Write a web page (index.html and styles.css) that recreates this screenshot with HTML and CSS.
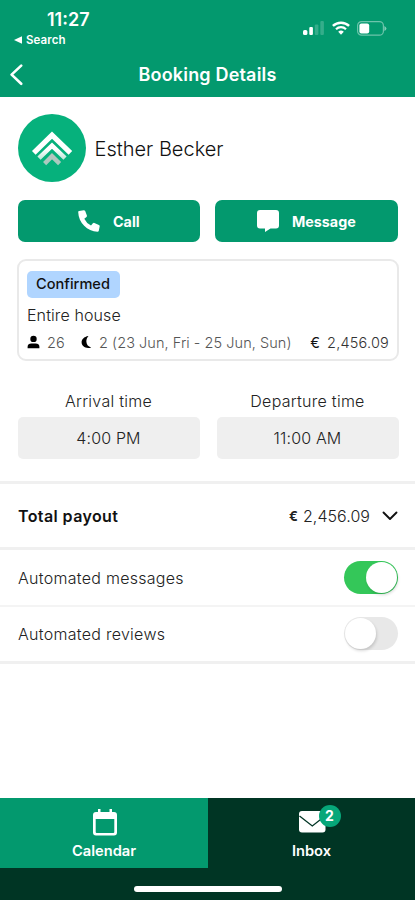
FILE: index.html
```html
<!DOCTYPE html>
<html lang="en">
<head>
<meta charset="utf-8">
<meta name="viewport" content="width=device-width, initial-scale=1">
<title>Booking Details</title>
<link rel="stylesheet" href="styles.css">
</head>
<body>
<div class="app">
  <header class="header">
    <div class="status">
      <div class="status-left">
        <div class="clock">11:27</div>
        <div class="back-app"><svg width="8" height="8" viewBox="0 0 8 8"><path d="M0 4 8 .2v7.6z" fill="#fff"/></svg><span>Search</span></div>
      </div>
      <div class="status-icons">
        <svg width="22" height="15" viewBox="0 0 22 15" fill="#fff"><rect x="0" y="9" width="4.4" height="5" rx="1.6"/><rect x="6.3" y="6" width="3.6" height="8" rx="1"/><rect x="11.8" y="3.5" width="3.6" height="10.5" rx="1" opacity=".2"/><rect x="17.3" y="0" width="3.6" height="14" rx="1" opacity=".2"/></svg>
        <svg class="wifi" width="18" height="14" viewBox="0 0 18 14" fill="none" stroke="#fff" stroke-width="2.5"><path d="M.9 4.9a11.7 11.7 0 0 1 16.2 0"/><path d="M4 8.2a7.2 7.2 0 0 1 10 0" stroke-width="2.2"/><path d="M9 13.8 6.2 10.8a4.2 4.2 0 0 1 5.6 0z" fill="#fff" stroke="none"/></svg>
        <svg class="battery" width="30" height="15" viewBox="0 0 30 15"><rect x=".6" y=".6" width="25.8" height="13.6" rx="4" fill="none" stroke="#fff" stroke-opacity=".42" stroke-width="1.2"/><path d="M27.4 5v5q2-1 2-2.5T27.4 5" fill="#fff" opacity=".5"/><rect x="2.4" y="2.4" width="9.8" height="10" rx="2" fill="#fff"/></svg>
      </div>
    </div>
    <div class="title-bar">
      <svg width="13" height="22" viewBox="0 0 13 22" fill="none" stroke="#fff" stroke-width="2.6" stroke-linecap="round" stroke-linejoin="round"><path d="M11.2 1.6 1.600 10.600l9.600 9.200"/></svg>
      <h1>Booking Details</h1>
    </div>
  </header>

  <main>
    <section class="guest">
      <div class="avatar">
        <svg width="68" height="68" viewBox="0 0 68 68" fill="none" stroke-width="5.2">
          <defs>
            <linearGradient id="g1" x1="0" y1="0" x2="0" y2="1"><stop offset=".3" stop-color="#fff"/><stop offset="1" stop-color="#c4eadc"/></linearGradient>
            <linearGradient id="g2" x1="0" y1="0" x2="0" y2="1"><stop offset="0" stop-color="#b5c4bf"/><stop offset="1" stop-color="#a9cbbf"/></linearGradient>
          </defs>
          <path d="M15.8 38.8 34 21.2l18.4 17.6" stroke="#fff"/>
          <path d="M21 44.2 34 31.6l13 12.6" stroke="url(#g1)" stroke-width="4.6"/>
          <path d="M26.6 49.6 34 42.2l7.6 7.4" stroke="url(#g2)" stroke-width="4.4"/>
        </svg>
      </div>
      <h2>Esther Becker</h2>
    </section>

    <section class="actions">
      <button class="btn call"><svg width="22" height="22" viewBox="0 0 22 22"><path d="M1.1.9 5.700.2q1-.1 1.500.8l1.700 4.500q.3.900-.4 1.500L6.300 8.700q2.100 4.500 6.700 6.800l1.900-2.200q.6-.7 1.500-.4l4.500 2q.9.400.8 1.400l-.9 4.500q-.2 1-1.300 1C9.400 21.300.5 13 .2 2q0-1 .9-1.100z" fill="#fff"/></svg><span>Call</span></button>
      <button class="btn message"><svg width="22" height="22" viewBox="0 0 22 22"><path d="M3 0h16q3 0 3 3v12.500q0 3-3 3h-5.500L8 22v-3.500H3q-3 0-3-3V3q0-3 3-3" fill="#fff"/></svg><span>Message</span></button>
    </section>

    <section class="card">
      <div class="badge">Confirmed</div>
      <div class="place">Entire house</div>
      <div class="facts">
        <svg width="13" height="14" viewBox="0 0 13 14"><circle cx="6.500" cy="3.900" r="3.200"/><path d="M.6 13.200V11.800C.6 9.700 2.200 8.600 4.300 8.600h4.400c2.100 0 3.700 1.100 3.700 3.200v1.400z"/></svg>
        <span class="people">26</span>
        <svg class="moon" width="11" height="14" viewBox="0 0 11 14"><path d="M7.500.9C2.800 1.600.6 4.500.6 7.300c0 3.900 4.400 7 9.600 5.200C4.800 11.500 3.900 4.700 7.500.9z"/></svg>
        <span class="nights">2 (23 Jun, Fri - 25 Jun, Sun)</span>
        <span class="price"><b>€</b><span>2,456.09</span></span>
      </div>
    </section>

    <section class="times">
      <div class="time"><div class="time-label">Arrival time</div><div class="time-value">4:00 PM</div></div>
      <div class="time"><div class="time-label">Departure time</div><div class="time-value">11:00 AM</div></div>
    </section>

    <section class="row payout">
      <span class="total">Total payout</span>
      <span class="amount"><b>€</b><span>2,456.09</span>
      <svg width="16" height="10" viewBox="0 0 16 10" fill="none" stroke="#111" stroke-width="1.900" stroke-linecap="round" stroke-linejoin="round"><path d="M1.500 1.500 8 8l6.500-6.500"/></svg></span>
    </section>
    <section class="row messages"><span>Automated messages</span><span class="switch on"><i></i></span></section>
    <section class="row reviews"><span>Automated reviews</span><span class="switch"><i></i></span></section>
  </main>

  <nav class="tabs">
    <div class="tab active">
      <svg width="24" height="27" viewBox="0 0 24 27"><path fill="#fff" fill-rule="evenodd" d="M5 0h2.500v3h9V0H19v3h2q3 0 3 3v17.500q0 3-3 3H3q-3 0-3-3V6q0-3 3-3h2zM2.700 10v13q0 1 1 1h16.600q1 0 1-1V10z"/></svg>
      <span>Calendar</span>
    </div>
    <div class="tab">
      <div class="mail">
        <svg width="27" height="22" viewBox="0 0 27 22"><rect width="26.500" height="21.500" rx="3" fill="#fff"/><path d="M.5 5 13.300 15 26 5" fill="none" stroke="#003524" stroke-width="1.300"/></svg>
        <b class="count">2</b>
      </div>
      <span>Inbox</span>
    </div>
  </nav>
  <footer class="home"><div class="home-bar"></div></footer>
</div>
</body>
</html>
```
FILE: styles.css
```css
* { box-sizing: border-box; }
body { margin: 0; background: #fff; font-family: Inter, "Liberation Sans", sans-serif; color: #222; }
svg { display: block; flex: none; }
h1, h2 { margin: 0; font: inherit; }
.app { width: 415px; height: 900px; display: flex; flex-direction: column; overflow: hidden; white-space: nowrap; }
main { flex: 1; }

.header { height: 97px; background: #03996e; color: #fff; flex: none; }
.status { height: 52px; display: flex; justify-content: space-between; }
.status-left { padding: 9px 0 0 14px; }
.clock { font-size: 18px; line-height: 22px; font-weight: 600; padding-left: 33px; }
.back-app { display: flex; align-items: center; gap: 4px; font-size: 11.5px; font-weight: 600; line-height: 18px; letter-spacing: .1px; }
.status-icons { display: flex; padding: 21px 28px 0 0; }
.wifi { margin-left: 7px; }
.battery { margin-left: 7px; }
.title-bar { height: 45px; display: grid; grid-template-columns: 13px 1fr 13px; padding: 0 10px; align-items: center; }
.title-bar h1 { text-align: center; font-size: 18px; font-weight: 600; letter-spacing: .18px; line-height: 44px; }

.guest { display: flex; align-items: center; gap: 9px; height: 68px; margin: 17px 0 0 17.5px; }
.avatar { width: 68px; height: 68px; border-radius: 50%; background: #06b17c; }
.guest h2 { font-size: 20px; font-weight: 300; color: #111; padding-top: 2px; }

.actions { display: grid; grid-template-columns: 182.5px 183px; gap: 15px; margin: 18px 0 0 17.5px; }
.btn { height: 42px; border: 0; border-radius: 7px; background: #03996e; color: #fff; display: flex; align-items: center; font: 700 14.3px Inter, sans-serif; padding: 0; }
.call { padding-left: 60px; gap: 13.5px; }
.message { padding-left: 42px; gap: 13px; }

.card { height: 102px; width: 382px; margin: 17px 0 0 17px; border: 2px solid #e9e9e9; border-radius: 9px; padding: 10px 8px; }
.badge { width: 93px; height: 27px; line-height: 27px; border-radius: 5px; background: #b0d5ff; padding-left: 9px; font-size: 14.6px; font-weight: 500; color: #111; }
.place { font-size: 16px; line-height: 22px; margin-top: 6px; font-weight: 350; letter-spacing: .1px; }
.facts { display: flex; align-items: center; height: 20px; margin-top: 6px; font-size: 14.5px; font-weight: 300; color: #555; }
.people { margin-left: 7px; width: 34px; }
.nights { margin-left: 7px; letter-spacing: .05px; }
.price { margin-left: auto; display: flex; gap: 7px; color: #333; letter-spacing: .2px; }
.price b { color: #111; }

.times { display: grid; grid-template-columns: 182px 182px; gap: 17px; margin: 28px 0 0 17.5px; }
.time { text-align: center; }
.time-label { font-size: 16px; line-height: 24px; font-weight: 300; letter-spacing: .27px; }
.time-value { height: 42px; margin-top: 4px; line-height: 42px; font-size: 16px; font-weight: 350; letter-spacing: .15px; border-radius: 5px; background: #efefef; }

.row { display: flex; justify-content: space-between; align-items: center; padding: 0 17px 0 18px; border-bottom: 3px solid #f0f0f0; font-size: 16px; font-weight: 300; letter-spacing: .28px; }
.payout { height: 69px; margin-top: 22px; border-top: 3px solid #f0f0f0; }
.total { font-weight: 600; color: #111; letter-spacing: .4px; }
.amount { display: flex; align-items: center; font-weight: 350; letter-spacing: .05px; }
.amount b { font-size: 13px; margin-right: 5px; }
.amount svg { margin-left: 12px; }
.messages { height: 57px; border-bottom-width: 2px; border-color: #f4f4f4; }
.reviews { height: 57px; padding-bottom: 1px; }
.switch { width: 54px; height: 33px; border-radius: 17px; background: #e8e8e8; display: flex; padding: 1px; }
.switch i { width: 31px; height: 31px; border-radius: 50%; background: #fff; box-shadow: 1px 2px 3px rgba(0, 0, 0, .15); }
.switch.on { background: #34c759; justify-content: flex-end; }

.tabs { display: grid; grid-template-columns: 208px 207px; height: 70px; background: #003524; color: #fff; flex: none; }
.tab { display: flex; flex-direction: column; align-items: center; padding-top: 11px; font-size: 14.7px; font-weight: 600; }
.tab > span { line-height: 20px; margin-top: 5px; }
.active { background: #03996e; }
.active svg { margin-left: 1px; }
.mail { position: relative; height: 27px; padding-top: 2px; margin-left: 1px; }
.count { position: absolute; left: 20px; top: -4px; width: 22px; height: 22px; border-radius: 50%; background: #06a779; text-align: center; line-height: 22px; font-size: 14px; font-weight: 700; }
.home { height: 32px; flex: none; background: #003524; padding: 18px 0 0 134px; }
.home-bar { width: 148px; height: 6px; border-radius: 3px; background: #fff; }
```
